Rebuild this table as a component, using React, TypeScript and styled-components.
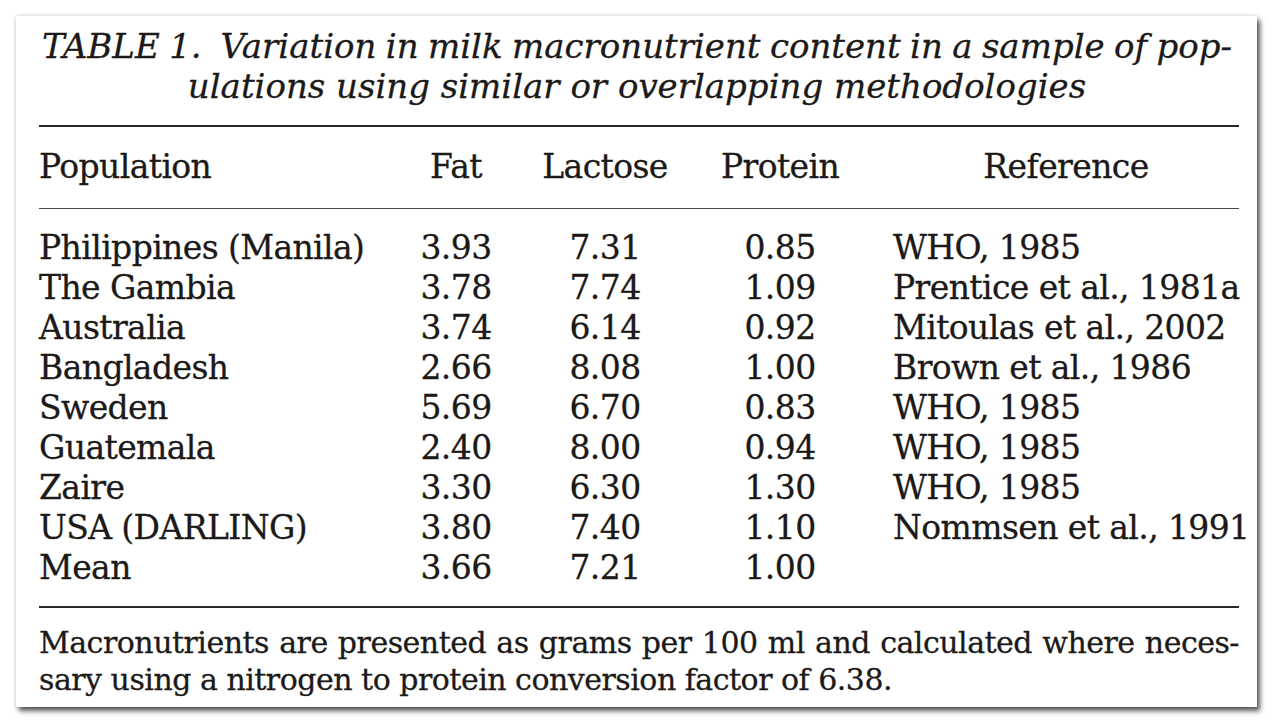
import React from "react";
import styled, { createGlobalStyle } from "styled-components";

const GlobalStyle = createGlobalStyle`
  html, body {
    margin: 0;
    padding: 0;
    background: #ffffff;
  }
`;

const Page = styled.div`
  padding: 16px 0 0 16px;
  width: 1274px;
  height: 724px;
  box-sizing: border-box;
  overflow: hidden;
`;

const Card = styled.div`
  width: 1241px;
  height: 691px;
  box-sizing: border-box;
  background: #ffffff;
  padding: 10px 18px 0 23px;
  color: #1c1a19;
  font-family: "DejaVu Serif", "Liberation Serif", serif;
  -webkit-text-stroke: 0.3px #1c1a19;
  box-shadow: 3px 4px 5px rgba(0, 0, 0, 0.65), 0 0 4px rgba(0, 0, 0, 0.18);
`;

const Caption = styled.div`
  font-style: italic;
  font-size: 34px;
  line-height: 40px;
  padding: 0 7px 0 3px;
`;

const CaptionLine = styled.span<{ $justify?: boolean }>`
  display: block;
  white-space: nowrap;
  word-spacing: ${({ $justify }) => ($justify ? "-4px" : "0")};
  text-align: ${({ $justify }) => ($justify ? "justify" : "center")};
  text-align-last: ${({ $justify }) => ($justify ? "justify" : "center")};
`;

const Rule = styled.div<{ $weight: number; $color: string; $gap: number }>`
  height: ${({ $weight }) => $weight}px;
  background: ${({ $color }) => $color};
  margin-top: ${({ $gap }) => $gap}px;
`;

const Grid = styled.div<{ $gap: number }>`
  display: grid;
  grid-template-columns: 357px 120px 178px 172px 1fr;
  font-size: 33px;
  line-height: 40px;
  letter-spacing: -0.6px;
  margin-top: ${({ $gap }) => $gap}px;
`;

const Cell = styled.div<{ $align?: "left" | "center" }>`
  text-align: ${({ $align }) => $align || "center"};
  white-space: nowrap;
`;

const RefCell = styled.div<{ $head?: boolean }>`
  padding-left: 27px;
  text-align: ${({ $head }) => ($head ? "center" : "left")};
  white-space: nowrap;
`;

const Note = styled.div`
  font-size: 30px;
  line-height: 37px;
  letter-spacing: -0.5px;
  margin-top: 16px;
`;

const NoteLine = styled.span<{ $justify?: boolean }>`
  display: block;
  white-space: nowrap;
  text-align: ${({ $justify }) => ($justify ? "justify" : "left")};
  text-align-last: ${({ $justify }) => ($justify ? "justify" : "left")};
`;

const rows = [
  ["Philippines (Manila)", "3.93", "7.31", "0.85", "WHO, 1985"],
  ["The Gambia", "3.78", "7.74", "1.09", "Prentice et al., 1981a"],
  ["Australia", "3.74", "6.14", "0.92", "Mitoulas et al., 2002"],
  ["Bangladesh", "2.66", "8.08", "1.00", "Brown et al., 1986"],
  ["Sweden", "5.69", "6.70", "0.83", "WHO, 1985"],
  ["Guatemala", "2.40", "8.00", "0.94", "WHO, 1985"],
  ["Zaire", "3.30", "6.30", "1.30", "WHO, 1985"],
  ["USA (DARLING)", "3.80", "7.40", "1.10", "Nommsen et al., 1991"],
  ["Mean", "3.66", "7.21", "1.00", ""],
];

export default function App() {
  return (
    <Page>
      <GlobalStyle />
      <Card>
        <Caption>
          <CaptionLine $justify>
            TABLE 1.&nbsp; Variation in milk macronutrient content in a sample of pop-
          </CaptionLine>
          <CaptionLine>ulations using similar or overlapping methodologies</CaptionLine>
        </Caption>

        <Rule $weight={2} $color="#2a2827" $gap={19} />

        <Grid $gap={20}>
          <Cell $align="left">Population</Cell>
          <Cell>Fat</Cell>
          <Cell>Lactose</Cell>
          <Cell>Protein</Cell>
          <RefCell $head>Reference</RefCell>
        </Grid>

        <Rule $weight={1} $color="#4a4847" $gap={21} />

        <Grid $gap={19}>
          {rows.map((r) => (
            <React.Fragment key={r[0]}>
              <Cell $align="left">{r[0]}</Cell>
              <Cell>{r[1]}</Cell>
              <Cell>{r[2]}</Cell>
              <Cell>{r[3]}</Cell>
              <RefCell>{r[4]}</RefCell>
            </React.Fragment>
          ))}
        </Grid>

        <Rule $weight={2} $color="#2a2827" $gap={18} />

        <Note>
          <NoteLine $justify>
            Macronutrients are presented as grams per 100 ml and calculated where neces-
          </NoteLine>
          <NoteLine>sary using a nitrogen to protein conversion factor of 6.38.</NoteLine>
        </Note>
      </Card>
    </Page>
  );
}
